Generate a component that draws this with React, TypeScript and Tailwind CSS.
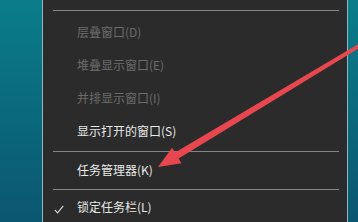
export default function App() {
  const disabled = ['层叠窗口(D)', '堆叠显示窗口(E)', '并排显示窗口(I)'];

  return (
    <div
      className="relative flex h-[222px] w-[358px] overflow-hidden"
      style={{ fontFamily: '"Microsoft YaHei", "Noto Sans CJK SC", sans-serif' }}
    >
      {/* left desktop strip */}
      <div className="w-[42px] bg-gradient-to-b from-[#0a7d8b] via-[#0a6a7d] to-[#0b5670]" />
      <div className="w-px bg-[#8fb9c2]" />

      {/* context menu */}
      <div className="flex flex-1 flex-col bg-[#2b2b2b] pt-[10px]">
        <div className="ml-[10px] mr-[8px] h-px bg-[#858585]" />
        <div className="mt-[5px]">
          {disabled.map((t) => (
            <div key={t} className="flex h-[33px] items-center pl-[34px] text-[12px] text-[#6b6b6b]">
              {t}
            </div>
          ))}
          <div className="flex h-[33px] items-center pl-[34px] text-[12px] text-[#e8e8e8]">
            显示打开的窗口(S)
          </div>
        </div>
        <div className="ml-[10px] mr-[8px] mt-[3px] h-px bg-[#858585]" />
        <div className="mt-[4px] flex h-[33px] items-center pl-[34px] text-[12px] text-[#e8e8e8]">
          任务管理器(K)
        </div>
        <div className="ml-[10px] mr-[8px] mt-[4px] h-px bg-[#858585]" />
        <div className="relative mt-[3px] flex h-[33px] items-center pl-[34px] text-[12px] text-[#e8e8e8]">
          <svg
            className="absolute left-[11px] top-[12px]"
            width="10"
            height="9"
            viewBox="0 0 10 9"
            fill="none"
          >
            <path d="M0.8 4.8 L3.6 7.8 L9.2 0.8" stroke="#d8d8d8" strokeWidth="1.1" />
          </svg>
          锁定任务栏(L)
        </div>
      </div>

      {/* right desktop strip */}
      <div className="w-px bg-[#8fb9c2]" />
      <div className="w-[10px] bg-gradient-to-b from-[#0a7d8b] to-[#0b5670]" />

      {/* red annotation arrow */}
      <svg
        className="pointer-events-none absolute left-0 top-0"
        width="358"
        height="222"
        viewBox="0 0 358 222"
      >
        <polygon
          points="360,43 360,47.5 178.6,158.5 181.5,163.2 158,167 172.1,147.8 175,152.5"
          fill="#e8474f"
        />
      </svg>
    </div>
  );
}
